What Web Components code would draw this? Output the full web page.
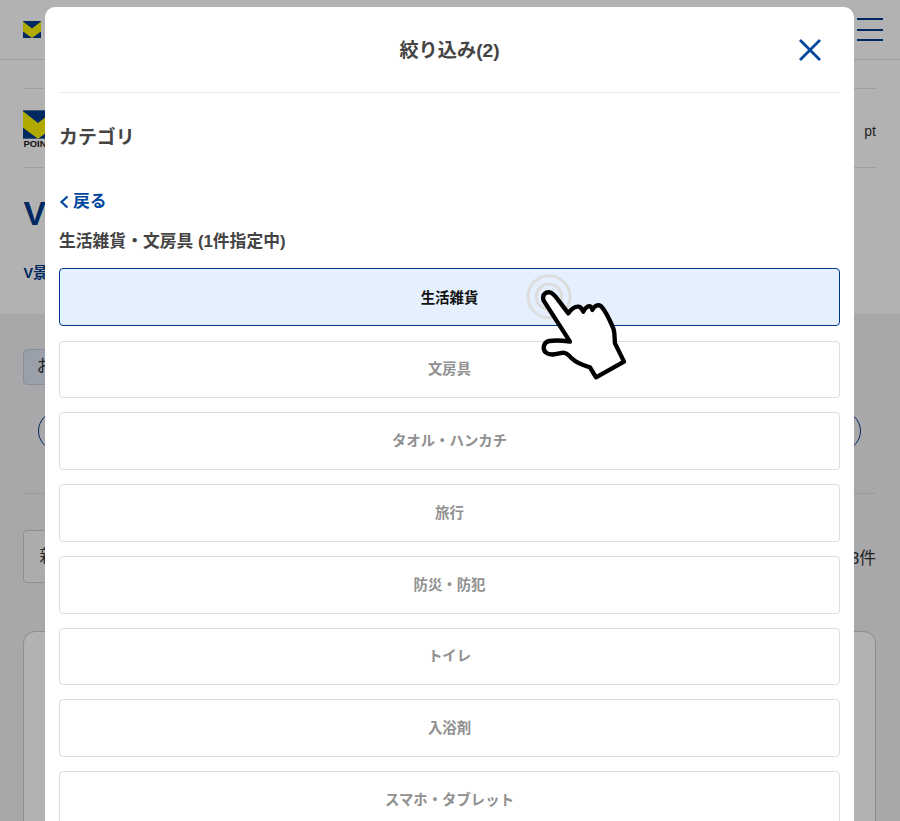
<!DOCTYPE html>
<html lang="ja">
<head>
<meta charset="utf-8">
<title>絞り込み</title>
<style>
  html, body { margin: 0; height: 821px; overflow: hidden; background: #fff; }
  body { font-family: "Liberation Sans", "Noto Sans CJK JP", sans-serif; color: #333; }
</style>
</head>
<body>
<point-page></point-page>
<filter-modal heading="カテゴリ" group="生活雑貨・文房具 (1件指定中)">
  <filter-option selected>生活雑貨</filter-option>
  <filter-option>文房具</filter-option>
  <filter-option>タオル・ハンカチ</filter-option>
  <filter-option>旅行</filter-option>
  <filter-option>防災・防犯</filter-option>
  <filter-option>トイレ</filter-option>
  <filter-option>入浴剤</filter-option>
  <filter-option>スマホ・タブレット</filter-option>
</filter-modal>
<tap-hint></tap-hint>

<script>
(function () {
  'use strict';

  const NAVY = '#003a8c';
  const BLUE = '#00479d';

  // Yellow chevron on navy, used twice at different sizes
  const logoSvg = (w, h) => `
    <svg width="${w}" height="${h}" viewBox="0 0 18 17" aria-hidden="true">
      <rect width="18" height="17" fill="#003a8c"/>
      <path d="M0 .5L9 7.6L18 .5V10.4L9 17L0 10.4z" fill="#fff200"/>
    </svg>`;

  // Page behind the dialog, mostly hidden by it
  class PointPage extends HTMLElement {
    constructor() {
      super();
      this.attachShadow({ mode: 'open' }).innerHTML = `
        <style>
          :host { display: block; height: 821px; overflow: hidden; font-size: 16.8px; color: #333; }
          header {
            height: 59px; border-bottom: 1px solid #ddd; padding: 0 17px 0 23.4px;
            display: flex; align-items: flex-start; justify-content: space-between;
          }
          header .logo { margin-top: 21px; display: block; }
          .burger { width: 26px; margin-top: 18px; display: flex; flex-direction: column; gap: 8.5px; }
          .burger i { display: block; height: 2px; background: ${NAVY}; }
          .top { background: #fff; height: 226px; padding: 0 24px 0 23.4px; box-sizing: border-box; }
          .points {
            margin-top: 28px; height: 80px; box-sizing: border-box;
            border-top: 1px solid #e4e4e4; border-bottom: 1px solid #e4e4e4;
            display: flex; align-items: center; justify-content: space-between;
          }
          .mark { display: flex; flex-direction: column; width: 60px; margin-top: 2px; }
          .mark svg { display: block; }
          .mark span { font-size: 9.5px; font-weight: 700; line-height: 10px; color: #222; }
          .pt { font-size: 14px; margin-top: 6px; }
          h1 { margin: 27px 0 0; font-size: 33.6px; line-height: 38px; color: ${NAVY}; }
          .sub { margin: 30px 0 0; font-size: 14.4px; font-weight: 700; line-height: 20px; color: ${NAVY}; }
          .lower { background: #f1f1f4; height: 510px; padding: 35px 24px 0 23.4px; box-sizing: border-box; }
          .tag {
            width: 80px; height: 36px; padding-left: 12px; box-sizing: border-box; line-height: 34px;
            background: #dde6f2; border: 1px solid #c4cede; border-radius: 4px;
          }
          .pill { margin: 26px 15px 0 14.6px; height: 40px; box-sizing: border-box; border: 1px solid ${NAVY}; border-radius: 20px; }
          .rule { margin-top: 42px; border-top: 1px solid #ddd; }
          .sort { margin-top: 36px; display: flex; align-items: center; justify-content: space-between; }
          .select {
            width: 80px; height: 53px; box-sizing: border-box; padding-left: 15px; line-height: 51px;
            background: #f7f7f7; border: 1px solid #ccc; border-radius: 4px;
          }
          .card {
            margin-top: 48px; height: 300px; background: #fff;
            border: 1px solid #ccc; border-radius: 12px;
          }
        </style>
        <header>
          <span class="logo">${logoSvg(18, 17)}</span>
          <div class="burger"><i></i><i></i><i></i></div>
        </header>
        <section class="top">
          <div class="points">
            <div class="mark">${logoSvg(30, 29)}<span>POINT</span></div>
            <span class="pt">pt</span>
          </div>
          <h1>V</h1>
          <p class="sub">V景</p>
        </section>
        <section class="lower">
          <div class="tag">お</div>
          <div class="pill"></div>
          <div class="rule"></div>
          <div class="sort"><div class="select">新</div><span>3件</span></div>
          <div class="card"></div>
        </section>`;
    }
  }

  class FilterOption extends HTMLElement {
    constructor() {
      super();
      this.attachShadow({ mode: 'open' }).innerHTML = `
        <style>
          :host {
            display: flex; align-items: center; justify-content: center;
            height: 57.75px; box-sizing: border-box; padding-bottom: 3px;
            background: #fff; border: 1px solid #ddd; border-radius: 4px;
            font-size: 14.4px; font-weight: 700; color: #909090;
          }
          :host([selected]) { background: #e5effd; border-color: ${NAVY}; color: #111; margin-bottom: .75px; padding-bottom: 1px; }
        </style>
        <slot></slot>`;
    }
  }

  class FilterModal extends HTMLElement {
    constructor() {
      super();
      const heading = this.getAttribute('heading');
      const group = this.getAttribute('group');
      this.attachShadow({ mode: 'open' }).innerHTML = `
        <style>
          :host { position: absolute; inset: 0; display: block; background: rgba(0,0,0,.3); overflow: hidden; }
          .dialog {
            position: absolute; left: 45px; top: 7px; width: 809px; height: 900px;
            box-sizing: border-box; padding: 0 14px;
            background: #fff; border-radius: 10px; color: #444;
          }
          .head {
            height: 86px; padding-bottom: 2px; box-sizing: border-box; border-bottom: 1px solid #eee; position: relative;
            display: flex; align-items: center; justify-content: center;
            font-size: 19.2px; font-weight: 700;
          }
          .close { position: absolute; right: 19px; top: 32px; width: 22px; height: 22px; }
          h2 { margin: 32px 0 0; font-size: 18.9px; line-height: 26px; }
          .back {
            margin-top: 40px; display: flex; align-items: center; gap: 3px;
            font-size: 16.8px; font-weight: 700; line-height: 22px; color: ${BLUE};
          }
          h3 { margin: 18px 0 0; font-size: 16.8px; line-height: 22px; }
          .list { margin-top: 15px; display: flex; flex-direction: column; gap: 14px; }
        </style>
        <div class="dialog">
          <div class="head">
            <span>絞り込み(2)</span>
            <svg class="close" viewBox="0 0 22 22" aria-label="閉じる">
              <path d="M1 1l20 20M21 1L1 21" stroke="${BLUE}" stroke-width="2.8" fill="none"/>
            </svg>
          </div>
          <h2>${heading}</h2>
          <div class="back">
            <svg width="11" height="14" viewBox="0 0 11 14" aria-hidden="true">
              <path d="M8.5 1.5L2.5 7l6 5.5" stroke="${BLUE}" stroke-width="2.2" fill="none"/>
            </svg>
            <span>戻る</span>
          </div>
          <h3>${group}</h3>
          <div class="list"><slot></slot></div>
        </div>`;
    }
  }

  // Pointing hand with ripple, laid over the first option
  class TapHint extends HTMLElement {
    constructor() {
      super();
      this.attachShadow({ mode: 'open' }).innerHTML = `
        <style>
          :host { position: absolute; left: 500px; top: 260px; width: 150px; height: 130px; display: block; }
          svg { display: block; }
        </style>
        <svg width="150" height="130" viewBox="0 0 450 390" aria-hidden="true">
          <circle cx="147" cy="110" r="63" fill="none" stroke="#ddd" stroke-width="9"/>
          <circle cx="147" cy="110" r="38" fill="none" stroke="#ddd" stroke-width="9"/>
          <path d="M131 122C124 104 138 95 150 97C160 99 168 112 176 122L205 160
                   C212 148 226 138 236 140C244 142 248 150 250 155C256 142 266 136 272 140
                   C276 143 277 148 277 150C282 138 294 132 302 138C312 146 330 182 340 205
                   C346 222 343 238 345 250L372 305L288 352L270 322C248 316 230 310 215 295
                   C205 284 198 278 190 278C172 282 150 288 138 278C126 268 130 246 148 243
                   C168 240 190 242 210 245L131 122Z"
                fill="#fff" stroke="#000" stroke-width="13" stroke-linejoin="round"/>
        </svg>`;
    }
  }

  customElements.define('point-page', PointPage);
  customElements.define('filter-option', FilterOption);
  customElements.define('filter-modal', FilterModal);
  customElements.define('tap-hint', TapHint);
})();
</script>
</body>
</html>
